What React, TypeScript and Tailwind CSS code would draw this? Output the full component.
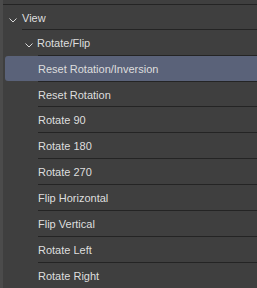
const items = [
  "Rotate 90",
  "Rotate 180",
  "Rotate 270",
  "Flip Horizontal",
  "Flip Vertical",
  "Rotate Left",
  "Rotate Right",
];

function Chevron() {
  return (
    <svg width="8" height="5" viewBox="0 0 8 5" className="shrink-0 mt-[4px]">
      <polyline points="0.5,0.5 4,4 7.5,0.5" fill="none" stroke="#d8d8d8" strokeWidth="1" />
    </svg>
  );
}

function Line({ indent }: { indent: number }) {
  return <div className="h-px bg-[#242424]" style={{ marginLeft: indent }} />;
}

export default function App() {
  return (
    <div
      className="flex w-[257px] h-[288px] overflow-hidden bg-[#3f3f3f] text-[11px] text-[#dedede]"
      style={{ fontFamily: '"Liberation Sans", Arial, sans-serif' }}
    >
      <div className="w-[3px] shrink-0 bg-[#4b4b4b]" />
      <div className="flex-1 flex flex-col">
        <div className="h-[4px]" />
        <Line indent={0} />
        <div className="h-[25px] flex items-center pl-[6px] pt-[2px] gap-[5px]">
          <Chevron />
          <span>View</span>
        </div>
        <Line indent={19} />
        <div className="h-[25px] flex items-center pl-[22px] pt-[2px] gap-[4px]">
          <Chevron />
          <span>Rotate/Flip</span>
        </div>
        <Line indent={35} />
        <div className="h-[25px] flex items-center ml-[2px] pl-[33px] pt-[2px] bg-[#5a6279] rounded-l-[3px]">
          Reset Rotation/Inversion
        </div>
        <Line indent={35} />
        <div className="h-[25px] flex items-center pl-[35px] pt-[2px]">Reset Rotation</div>
        {items.map((t) => (
          <div key={t}>
            <Line indent={35} />
            <div className="h-[25px] flex items-center pl-[35px] pt-[2px]">{t}</div>
          </div>
        ))}
      </div>
    </div>
  );
}
